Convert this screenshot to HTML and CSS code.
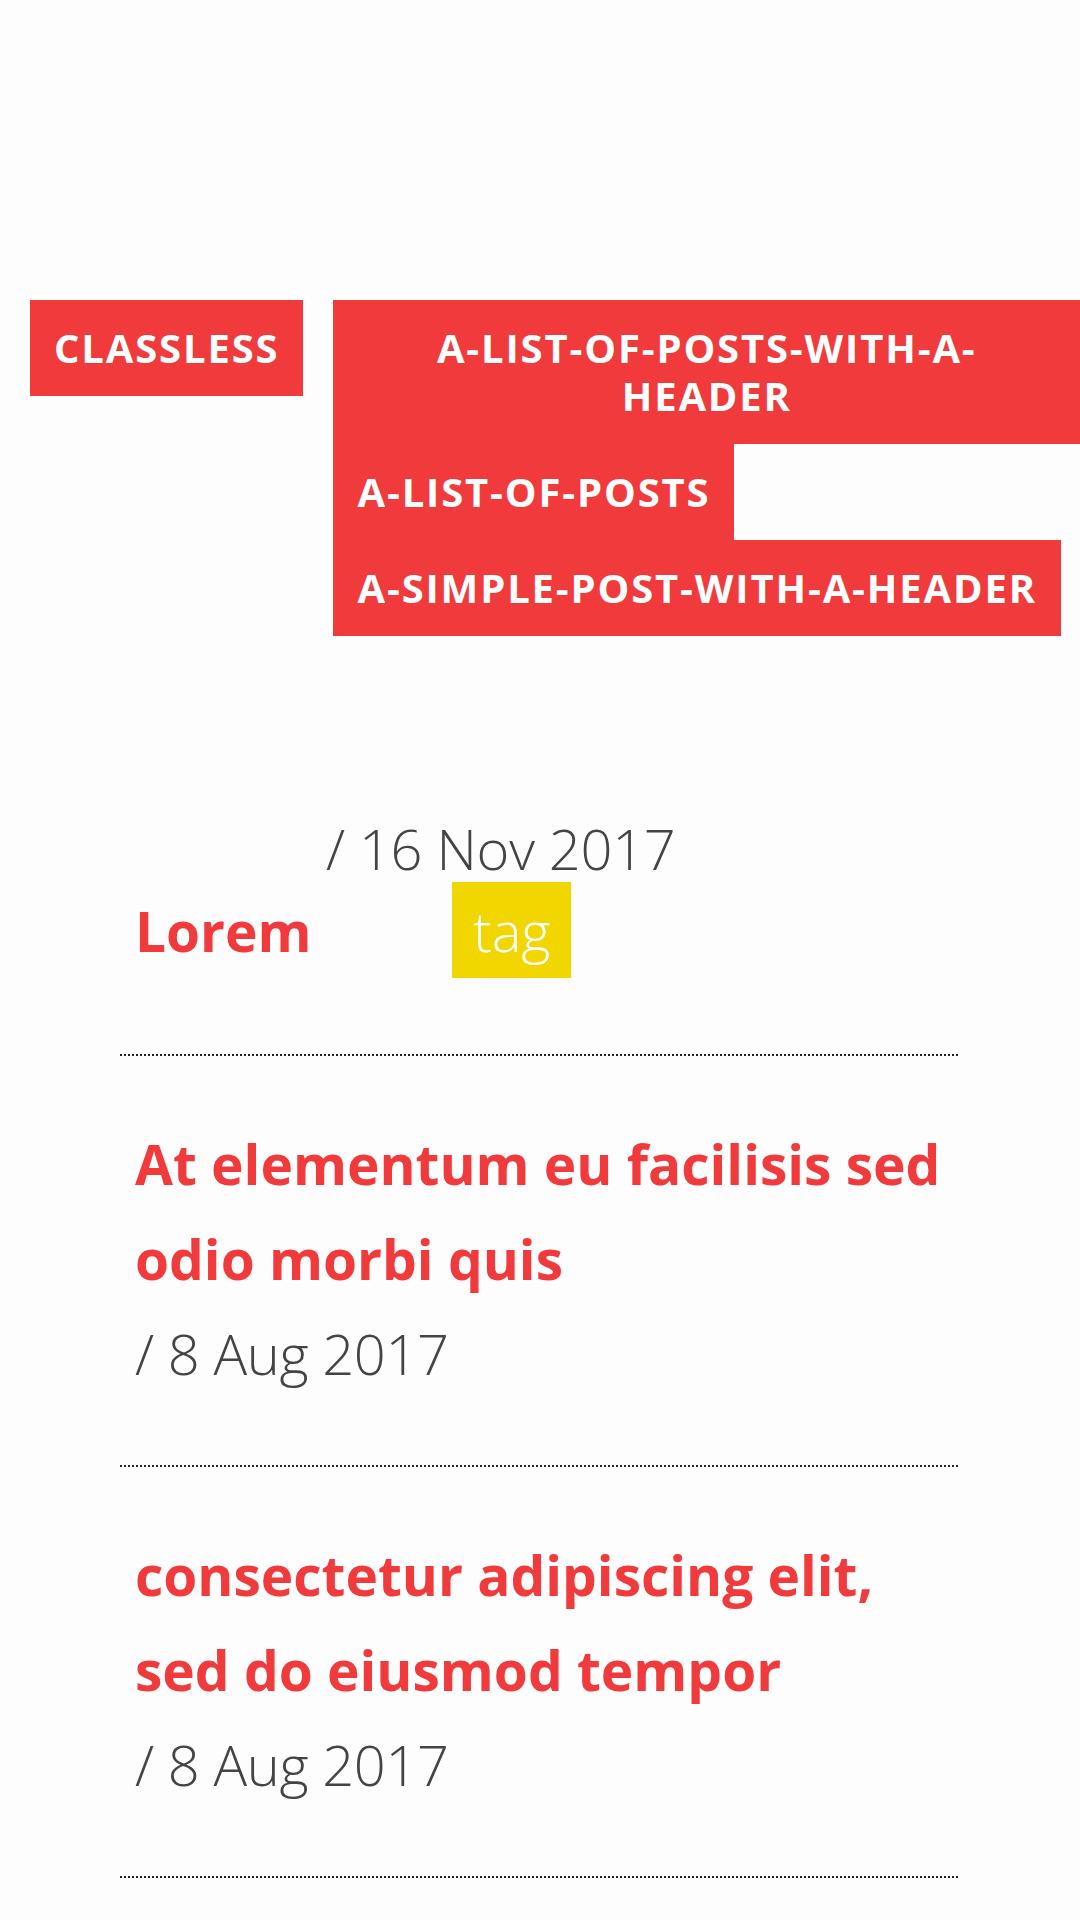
FILE: index.html
```html
<!DOCTYPE html>
<html lang="en">
<head>
<meta charset="utf-8">
<title>Classless</title>
<link rel="stylesheet" href="styles.css">
</head>
<body>
<header class="site-header">
  <nav class="site-nav">
    <a class="nav-item nav-home" href="#">CLASSLESS</a>
    <div class="nav-list">
      <a class="nav-item nav-wide" href="#">A-LIST-OF-POSTS-WITH-A-HEADER</a>
      <a class="nav-item" href="#">A-LIST-OF-POSTS</a>
      <a class="nav-item" href="#">A-SIMPLE-POST-WITH-A-HEADER</a>
    </div>
  </nav>
</header>
<main class="posts">
  <article class="post">
    <h2 class="post-title post-title-lead"><a href="#">Lorem</a> <span class="post-meta"><span class="post-date">/ 16 Nov 2017</span><span class="post-tag">tag</span></span></h2>
  </article>
  <article class="post">
    <h2 class="post-title"><a href="#">At elementum eu facilisis sed odio morbi quis</a></h2>
    <p class="post-date-line">/ 8 Aug 2017</p>
  </article>
  <article class="post">
    <h2 class="post-title"><a href="#">consectetur adipiscing elit, sed do eiusmod tempor</a></h2>
    <p class="post-date-line">/ 8 Aug 2017</p>
  </article>
</main>
</body>
</html>
```
FILE: styles.css
```css
html, body {
  margin: 0;
  padding: 0;
  background: #fdfdfd;
}
body {
  font-family: "Open Sans", "Liberation Sans", sans-serif;
  color: #444444;
}
a {
  text-decoration: none;
}
.site-header {
  padding-top: 300px;
}
.site-nav {
  display: flex;
  align-items: flex-start;
  gap: 30px;
  padding-left: 30px;
}
.nav-list {
  flex: 1;
  min-width: 0;
  display: flex;
  flex-direction: column;
  align-items: flex-start;
}
.nav-item {
  display: block;
  background: #f03a3b;
  color: #ffffff;
  font-size: 40px;
  font-weight: 700;
  line-height: 48px;
  letter-spacing: 1.85px;
  padding: 24px;
}
.nav-wide {
  text-align: center;
}
.posts {
  width: 840px;
  margin: 119px auto 0;
}
.post {
  padding: 60px 0 66px 15px;
  background: repeating-linear-gradient(to right, #222222 0 2px, transparent 2px 4px) left bottom / 100% 2px no-repeat;
}
.post-title {
  margin: 0;
  font-size: 55px;
  font-weight: 700;
  line-height: 95px;
}
.post-title a {
  color: #f03a3b;
}
.post-title-lead {
  margin-bottom: 12px;
}
.post-meta {
  display: inline-block;
  vertical-align: baseline;
  font-size: 56px;
  font-weight: 300;
  line-height: 1.2;
}
.post-date {
  display: block;
  color: #444444;
  letter-spacing: -0.3px;
}
.post-tag {
  display: block;
  width: fit-content;
  margin-left: 126px;
  padding: 20px 21px;
  line-height: 56px;
  background: #f2d600;
  color: #ffffff;
}
.post-date-line {
  margin: 0;
  font-size: 56px;
  font-weight: 300;
  line-height: 95px;
  letter-spacing: -0.4px;
  color: #444444;
}
```
